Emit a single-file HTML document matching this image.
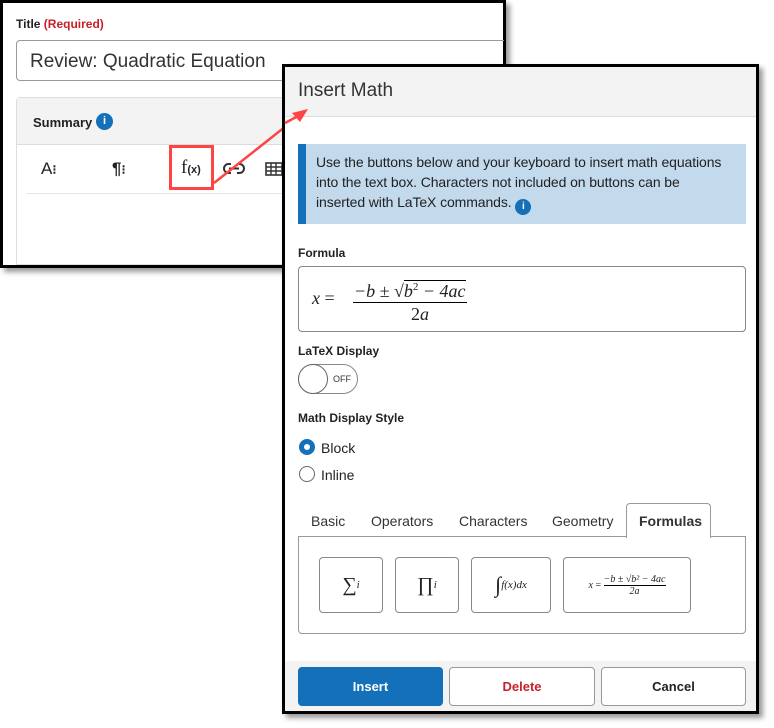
<!DOCTYPE html>
<html><head><meta charset="utf-8"><style>
*{box-sizing:border-box;margin:0;padding:0}
body{width:774px;height:728px;background:#fff;position:relative;font-family:"Liberation Sans",sans-serif;color:#222;overflow:hidden}
.abs{position:absolute}
.lbl{font-weight:bold;font-size:12px;color:#222}
.math{font-family:"Liberation Serif",serif;font-style:italic}
.btn{position:absolute;top:667px;height:39px;border:1px solid #999;border-radius:4px;font-weight:bold;font-size:13px;display:flex;align-items:center;justify-content:center;background:#fff}
.fb{position:absolute;top:557px;height:56px;border:1px solid #888;border-radius:4px;display:flex;align-items:center;justify-content:center;font-family:"Liberation Serif",serif}
</style></head><body>
<!-- left panel -->
<div class="abs" style="left:0;top:0;width:506px;height:268px;border:3px solid #000;box-shadow:4px 4px 5px #999;background:#fff"></div>
<div class="abs lbl" style="left:16px;top:17px">Title <span style="color:#c8202a">(Required)</span></div>
<div class="abs" style="left:16px;top:40px;width:488px;height:41px;border:1px solid #999;border-right:none;border-radius:4px 0 0 4px;font-size:19px;padding:10px 0 0 13px;color:#333">Review: Quadratic Equation</div>
<div class="abs" style="left:16px;top:97px;width:488px;height:168px;border:1px solid #ddd;border-right:none;border-radius:4px 0 0 0"></div>
<div class="abs" style="left:17px;top:98px;width:486px;height:47px;background:#f3f3f3;border-bottom:1px solid #ddd"></div>
<div class="abs lbl" style="left:33px;top:115px;font-size:13px">Summary</div>
<div class="abs" style="left:96px;top:113px;width:17px;height:17px;border-radius:50%;background:#1470b9;color:#fff;font-size:11px;font-weight:bold;text-align:center;line-height:17px">i</div>
<div class="abs" style="left:41px;top:159px;font-size:17px">A<span style="font-size:13px;font-weight:bold">⁝</span></div>
<div class="abs" style="left:112px;top:159px;font-size:17px;font-weight:bold">¶<span style="font-size:13px">⁝</span></div>
<div class="abs" style="left:169px;top:145px;width:45px;height:45px;border:3px solid #f44"></div>
<div class="abs math" style="left:181px;top:157px;font-size:19px;font-style:normal">f<span style="font-size:11px;font-family:'Liberation Sans';font-weight:bold">(x)</span></div>
<svg class="abs" style="left:222px;top:161px" width="24" height="16"><rect x="2" y="3" width="12" height="9" rx="4.5" fill="none" stroke="#333" stroke-width="2"/><rect x="10" y="3" width="12" height="9" rx="4.5" fill="none" stroke="#333" stroke-width="2"/><rect x="9" y="0" width="6" height="16" fill="#fff"/><line x1="7" y1="7.5" x2="17" y2="7.5" stroke="#333" stroke-width="2"/></svg>
<svg class="abs" style="left:265px;top:162px" width="18" height="14"><rect x="1" y="1" width="16" height="12" fill="none" stroke="#333" stroke-width="1.6"/><path d="M1 5h16M1 9h16M6 1v12M11 1v12" stroke="#333" stroke-width="1.4"/></svg>
<div class="abs" style="left:26px;top:193px;width:470px;height:1px;background:#e5e5e5"></div>
<!-- arrow -->
<svg class="abs" style="left:0;top:0" width="774" height="728"><line x1="214" y1="183" x2="300" y2="115" stroke="#f44" stroke-width="2.5"/><polygon points="308,109 292,113 300,122" fill="#f44"/></svg>
<!-- dialog -->
<div class="abs" style="left:282px;top:64px;width:477px;height:650px;border:3px solid #000;background:#fff;box-shadow:4px 4px 5px #999"></div>
<div class="abs" style="left:285px;top:67px;width:471px;height:50px;background:#f3f3f3;border-bottom:1px solid #ddd"></div>
<svg class="abs" style="left:0;top:0" width="320" height="128"><line x1="285" y1="123" x2="300" y2="115" stroke="#f44" stroke-width="2.5"/><polygon points="308,109 292,113 300,122" fill="#f44"/></svg>
<div class="abs" style="left:298px;top:80px;font-size:19px;color:#333">Insert Math</div>
<div class="abs" style="left:298px;top:144px;width:448px;height:80px;background:#c3d9ec;border-left:8px solid #1470b9;padding:8px 14px 0 10px;font-size:14px;line-height:20px;color:#222;letter-spacing:-0.1px">Use the buttons below and your keyboard to insert math equations into the text box. Characters not included on buttons can be inserted with LaTeX commands. <span style="display:inline-block;width:16px;height:16px;border-radius:50%;background:#1470b9;color:#fff;font-size:10px;font-weight:bold;text-align:center;line-height:16px;vertical-align:-2px">i</span></div>
<div class="abs lbl" style="left:298px;top:246px">Formula</div>
<div class="abs" style="left:298px;top:266px;width:448px;height:66px;border:1px solid #888;border-radius:4px"></div>
<div class="abs math" style="left:312px;top:288px;font-size:18px">x <span style="font-style:normal">=</span></div>
<div class="abs math" style="left:353px;top:277px;font-size:18px;border-bottom:1px solid #000;line-height:21px;padding:0 1px">−b ± √<span style="border-top:1px solid #000">b<sup style="font-size:11px;font-style:normal">2</sup> − 4ac</span></div>
<div class="abs math" style="left:411px;top:304px;font-size:18px"><span style="font-style:normal">2</span>a</div>
<div class="abs lbl" style="left:298px;top:344px">LaTeX Display</div>
<div class="abs" style="left:298px;top:364px;width:60px;height:30px;border:1px solid #888;border-radius:15px"></div>
<div class="abs" style="left:298px;top:364px;width:30px;height:30px;border:1px solid #666;border-radius:50%;background:#fff"></div>
<div class="abs" style="left:333px;top:374px;font-size:9px;color:#333">OFF</div>
<div class="abs lbl" style="left:298px;top:411px">Math Display Style</div>
<div class="abs" style="left:299px;top:439px;width:16px;height:16px;border-radius:50%;border:5px solid #1470b9"></div>
<div class="abs" style="left:321px;top:440px;font-size:14px">Block</div>
<div class="abs" style="left:299px;top:466px;width:16px;height:16px;border-radius:50%;border:1px solid #666"></div>
<div class="abs" style="left:321px;top:467px;font-size:14px">Inline</div>
<div class="abs" style="left:298px;top:536px;width:448px;height:98px;border:1px solid #999;border-radius:0 0 4px 4px"></div>
<div class="abs" style="left:626px;top:503px;width:85px;height:35px;border:1px solid #999;border-bottom:none;border-radius:4px 4px 0 0;background:#fff"></div>
<div class="abs" style="left:311px;top:513px;font-size:14px;color:#333">Basic</div>
<div class="abs" style="left:371px;top:513px;font-size:14px;color:#333">Operators</div>
<div class="abs" style="left:459px;top:513px;font-size:14px;color:#333">Characters</div>
<div class="abs" style="left:552px;top:513px;font-size:14px;color:#333">Geometry</div>
<div class="abs" style="left:639px;top:513px;font-size:14px;font-weight:bold;color:#333">Formulas</div>
<div class="fb" style="left:319px;width:64px"><span style="font-size:20px">∑</span><i style="font-size:11px;vertical-align:6px">i</i></div>
<div class="fb" style="left:395px;width:64px"><span style="font-size:20px">∏</span><i style="font-size:11px;vertical-align:6px">i</i></div>
<div class="fb" style="left:471px;width:80px"><span style="font-size:22px">∫</span><i style="font-size:11px">f(x)dx</i></div>
<div class="fb" style="left:563px;width:128px;font-size:10px"><i>x</i>&nbsp;=&nbsp;<span style="display:inline-block;text-align:center"><span style="border-bottom:1px solid #000;display:block"><i>−b ± √b² − 4ac</i></span><i>2a</i></span></div>
<div class="abs" style="left:285px;top:661px;width:471px;height:50px;background:#f3f3f3"></div>
<div class="btn" style="left:298px;width:145px;background:#1470b9;border-color:#1470b9;color:#fff">Insert</div>
<div class="btn" style="left:449px;width:146px;color:#c8202a">Delete</div>
<div class="btn" style="left:601px;width:145px;color:#222">Cancel</div>
</body></html>
